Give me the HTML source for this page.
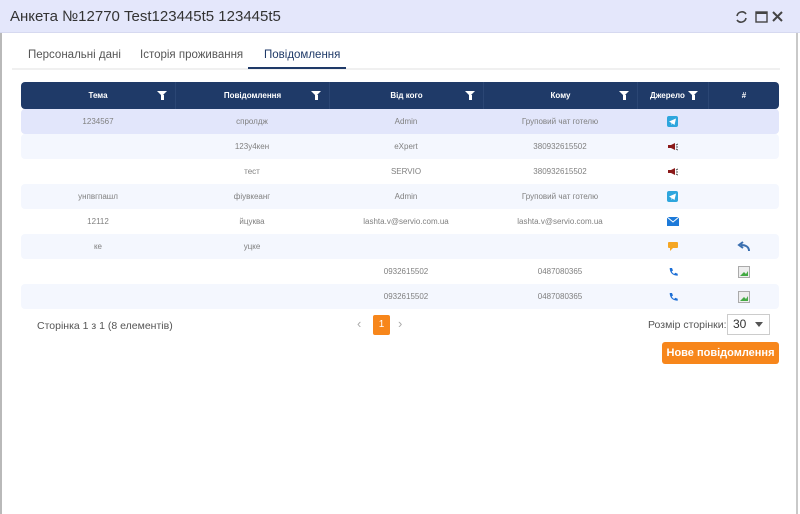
<!DOCTYPE html>
<html><head><meta charset="utf-8"><style>
*{margin:0;padding:0;box-sizing:border-box}
body{width:800px;height:514px;background:#fff;font-family:"Liberation Sans","Noto Sans CJK SC",sans-serif;position:relative;overflow:hidden}
.frame{position:absolute;left:0;top:0;width:798px;height:514px;border-left:2px solid #b9b9b9;border-right:2px solid #c9c9c9;background:#fff}
.title{position:absolute;left:0;top:0;width:800px;height:33px;background:#e4e7fb;border-bottom:1px solid #d6d9f0}
.title span{position:absolute;left:10px;top:8px;font-size:15px;color:#333}
.tabs{position:absolute;left:12px;top:47px;width:768px;height:23px;border-bottom:2px solid #f0f0f0;font-size:11.5px;color:#555}
.tabs span{position:absolute;top:2px}
.ul{position:absolute;left:248px;top:67px;width:98px;height:2px;background:#1f3a68}
table{position:absolute;left:21px;top:82px;width:758px;border-collapse:separate;border-spacing:0;font-size:8px;color:#808080;table-layout:fixed}
th{background:#1f3a68;color:#fff;height:27px;font-weight:bold;position:relative;border-left:1px solid #2b4674}
th:first-child{border-radius:4px 0 0 4px;border-left:none}th:last-child{border-radius:0 4px 4px 0}
th i{position:absolute;right:8px;top:9px;width:0;height:0;border-left:5px solid transparent;border-right:5px solid transparent;border-top:5px solid #fff}
th i:after{content:"";position:absolute;left:-1.5px;top:-1px;width:3px;height:5px;background:#fff}
td{height:25px;text-align:center}
td svg{vertical-align:middle}
tr.a td{background:#f4f7fe}tr.s td{background:#e2e6fb}
tr td:first-child{border-radius:4px 0 0 4px}tr td:last-child{border-radius:0 4px 4px 0}
.pg{position:absolute;font-size:10.5px;color:#555}
.btn{position:absolute;left:662px;top:342px;width:117px;height:22px;background:#f7861b;color:#fff;font-weight:bold;font-size:11px;border-radius:3px;text-align:center;line-height:22px}
</style></head><body>
<div class="frame"></div>
<div class="title"><span>Анкета №12770 Test123445t5 123445t5</span>
<svg style="position:absolute;left:735px;top:10px" width="50" height="14" viewBox="0 0 50 14"><path d="M2 6a5 5 0 0 1 9-2M11 8a5 5 0 0 1-9 2" stroke="#444" stroke-width="1.6" fill="none"/><rect x="21" y="2" width="11" height="10" fill="none" stroke="#444" stroke-width="1.4"/><rect x="21" y="2" width="11" height="2" fill="#444"/><path d="M38 2l9 9M47 2l-9 9" stroke="#444" stroke-width="2"/></svg></div>
<div class="tabs"><span style="left:16px">Персональні дані</span><span style="left:128px">Історія проживання</span><span style="left:252px;color:#1f3a68">Повідомлення</span></div>
<div class="ul"></div>
<table>
<colgroup><col style="width:154px"><col style="width:154px"><col style="width:154px"><col style="width:154px"><col style="width:71px"><col style="width:71px"></colgroup>
<tr><th>Тема<i></i></th><th>Повідомлення<i></i></th><th>Від кого<i></i></th><th>Кому<i></i></th><th style="text-align:left;padding-left:12px">Джерело<i style="right:10px"></i></th><th>#</th></tr>
<tr class="s"><td>1234567</td><td>спролдж</td><td>Admin</td><td>Груповий чат готелю</td><td><svg width="11" height="11"><rect width="11" height="11" rx="2" fill="#2ea6dd"/><path d="M2 5.5l7-3-1.5 6.5-2-1.5-1 1.5v-2z" fill="#fff"/></svg></td><td></td></tr>
<tr class="a"><td></td><td>123у4кен</td><td>eXpert</td><td>380932615502</td><td><svg width="11" height="9"><path d="M1 3h3l4-2v7l-4-2H1z" fill="#8b1a1a"/><path d="M9 3l2-1M9 5h2M9 7l2 1" stroke="#555" stroke-width="1"/></svg></td><td></td></tr>
<tr><td></td><td>тест</td><td>SERVIO</td><td>380932615502</td><td><svg width="11" height="9"><path d="M1 3h3l4-2v7l-4-2H1z" fill="#8b1a1a"/><path d="M9 3l2-1M9 5h2M9 7l2 1" stroke="#555" stroke-width="1"/></svg></td><td></td></tr>
<tr class="a"><td>унпвгпашл</td><td>фіувкеанг</td><td>Admin</td><td>Груповий чат готелю</td><td><svg width="11" height="11"><rect width="11" height="11" rx="2" fill="#2ea6dd"/><path d="M2 5.5l7-3-1.5 6.5-2-1.5-1 1.5v-2z" fill="#fff"/></svg></td><td></td></tr>
<tr><td>12112</td><td>йцуква</td><td>lashta.v@servio.com.ua</td><td>lashta.v@servio.com.ua</td><td><svg width="12" height="9"><rect width="12" height="9" fill="#1d7ad9"/><path d="M0 0l6 5 6-5" stroke="#fff" fill="none" stroke-width="1"/></svg></td><td></td></tr>
<tr class="a"><td>ке</td><td>уцке</td><td></td><td></td><td><svg width="10" height="9"><rect width="10" height="6" rx="1" fill="#f5a623"/><path d="M2 6h3l-3 3z" fill="#f5a623"/></svg></td><td><svg width="13" height="11"><path d="M12 10c0-4-3-6-8-6M6 1L2 4l4 3" stroke="#3a6fb0" stroke-width="2" fill="none"/></svg></td></tr>
<tr><td></td><td></td><td>0932615502</td><td>0487080365</td><td><svg width="10" height="10"><path d="M2 1l2 0 1 2.5-1.3 1a5 5 0 0 0 2.5 2.5l1-1.3 2.5 1v2c-5 0-8-3-8-7.7z" fill="#1d6fd6"/></svg></td><td><svg width="12" height="12"><rect x=".5" y=".5" width="11" height="11" fill="#eee" stroke="#aaa"/><path d="M2 10l4-4 2 2 2-3v5z" fill="#4a4"/></svg></td></tr>
<tr class="a"><td></td><td></td><td>0932615502</td><td>0487080365</td><td><svg width="10" height="10"><path d="M2 1l2 0 1 2.5-1.3 1a5 5 0 0 0 2.5 2.5l1-1.3 2.5 1v2c-5 0-8-3-8-7.7z" fill="#1d6fd6"/></svg></td><td><svg width="12" height="12"><rect x=".5" y=".5" width="11" height="11" fill="#eee" stroke="#aaa"/><path d="M2 10l4-4 2 2 2-3v5z" fill="#4a4"/></svg></td></tr>
</table>
<div class="pg" style="left:37px;top:320px">Сторінка 1 з 1 (8 елементів)</div>
<div class="pg" style="left:357px;top:316px;color:#aaa;font-size:13px">‹</div>
<div style="position:absolute;left:373px;top:315px;width:17px;height:20px;background:#f7861b;border-radius:2px;color:#fff;font-size:10px;text-align:center;line-height:20px">1</div>
<div class="pg" style="left:398px;top:316px;color:#aaa;font-size:13px">›</div>
<div class="pg" style="left:648px;top:319px">Розмір сторінки:</div>
<div style="position:absolute;left:727px;top:314px;width:43px;height:21px;border:1px solid #ccc;font-size:12px;line-height:19px;padding-left:5px;color:#333;background:#fff">30<span style="position:absolute;right:6px;top:7px;border-left:4px solid transparent;border-right:4px solid transparent;border-top:5px solid #555"></span></div>
<div class="btn">Нове повідомлення</div>
</body></html>
